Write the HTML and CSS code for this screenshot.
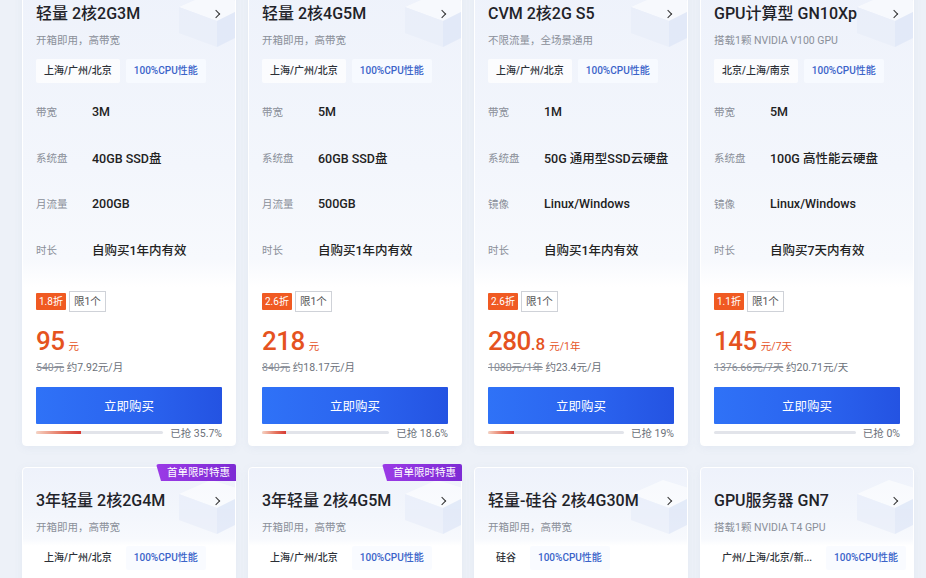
FILE: index.html
```html
<!DOCTYPE html>
<html lang="zh-CN">
<head>
<meta charset="utf-8">
<title>活动</title>
<link rel="stylesheet" href="styles.css">
</head>
<body>
<div class="grid">

  <div class="card">
    <div class="deco"><svg class="cube" viewBox="0 0 80 64" width="80" height="64"><polygon points="8,20 40,6 78,18 46,34" fill="#ffffff"/><polygon points="8,20 46,34 46,60 8,46" fill="#e6ecf9"/><polygon points="46,34 78,18 78,44 46,60" fill="#d8e2f6"/></svg></div>
    <div class="head"><span class="title">轻量 2核2G3M</span><span class="chev"></span></div>
    <div class="sub">开箱即用，高带宽</div>
    <div class="tags"><span class="tag">上海/广州/北京</span><span class="tag blue">100%CPU性能</span></div>
    <div class="specs">
      <div class="spec"><span class="k">带宽</span><span class="v">3M</span></div>
      <div class="spec"><span class="k">系统盘</span><span class="v">40GB SSD盘</span></div>
      <div class="spec"><span class="k">月流量</span><span class="v">200GB</span></div>
      <div class="spec"><span class="k">时长</span><span class="v">自购买1年内有效</span></div>
    </div>
    <div class="disc"><span class="off">1.8折</span><span class="lim">限1个</span></div>
    <div class="price"><span class="num">95</span><span class="unit">元</span></div>
    <div class="old"><s>540元</s> 约7.92元/月</div>
    <div class="btn">立即购买</div>
    <div class="prog"><div class="track"><div class="fill" style="width:35.7%"></div></div><span class="pct">已抢 35.7%</span></div>
  </div>

  <div class="card">
    <div class="deco"><svg class="cube" viewBox="0 0 80 64" width="80" height="64"><polygon points="8,20 40,6 78,18 46,34" fill="#ffffff"/><polygon points="8,20 46,34 46,60 8,46" fill="#e6ecf9"/><polygon points="46,34 78,18 78,44 46,60" fill="#d8e2f6"/></svg></div>
    <div class="head"><span class="title">轻量 2核4G5M</span><span class="chev"></span></div>
    <div class="sub">开箱即用，高带宽</div>
    <div class="tags"><span class="tag">上海/广州/北京</span><span class="tag blue">100%CPU性能</span></div>
    <div class="specs">
      <div class="spec"><span class="k">带宽</span><span class="v">5M</span></div>
      <div class="spec"><span class="k">系统盘</span><span class="v">60GB SSD盘</span></div>
      <div class="spec"><span class="k">月流量</span><span class="v">500GB</span></div>
      <div class="spec"><span class="k">时长</span><span class="v">自购买1年内有效</span></div>
    </div>
    <div class="disc"><span class="off">2.6折</span><span class="lim">限1个</span></div>
    <div class="price"><span class="num">218</span><span class="unit">元</span></div>
    <div class="old"><s>840元</s> 约18.17元/月</div>
    <div class="btn">立即购买</div>
    <div class="prog"><div class="track"><div class="fill" style="width:18.6%"></div></div><span class="pct">已抢 18.6%</span></div>
  </div>

  <div class="card">
    <div class="deco"><svg class="cube" viewBox="0 0 80 64" width="80" height="64"><polygon points="8,20 40,6 78,18 46,34" fill="#ffffff"/><polygon points="8,20 46,34 46,60 8,46" fill="#e6ecf9"/><polygon points="46,34 78,18 78,44 46,60" fill="#d8e2f6"/></svg></div>
    <div class="head"><span class="title">CVM 2核2G S5</span><span class="chev"></span></div>
    <div class="sub">不限流量，全场景通用</div>
    <div class="tags"><span class="tag">上海/广州/北京</span><span class="tag blue">100%CPU性能</span></div>
    <div class="specs">
      <div class="spec"><span class="k">带宽</span><span class="v">1M</span></div>
      <div class="spec"><span class="k">系统盘</span><span class="v">50G 通用型SSD云硬盘</span></div>
      <div class="spec"><span class="k">镜像</span><span class="v">Linux/Windows</span></div>
      <div class="spec"><span class="k">时长</span><span class="v">自购买1年内有效</span></div>
    </div>
    <div class="disc"><span class="off">2.6折</span><span class="lim">限1个</span></div>
    <div class="price"><span class="num">280</span><span class="dec">.8</span><span class="unit">元/1年</span></div>
    <div class="old"><s>1080元/1年</s> 约23.4元/月</div>
    <div class="btn">立即购买</div>
    <div class="prog"><div class="track"><div class="fill" style="width:19%"></div></div><span class="pct">已抢 19%</span></div>
  </div>

  <div class="card">
    <div class="deco"><svg class="cube" viewBox="0 0 80 64" width="80" height="64"><polygon points="8,20 40,6 78,18 46,34" fill="#ffffff"/><polygon points="8,20 46,34 46,60 8,46" fill="#e6ecf9"/><polygon points="46,34 78,18 78,44 46,60" fill="#d8e2f6"/></svg></div>
    <div class="head"><span class="title">GPU计算型 GN10Xp</span><span class="chev"></span></div>
    <div class="sub">搭载1颗 NVIDIA V100 GPU</div>
    <div class="tags"><span class="tag">北京/上海/南京</span><span class="tag blue">100%CPU性能</span></div>
    <div class="specs">
      <div class="spec"><span class="k">带宽</span><span class="v">5M</span></div>
      <div class="spec"><span class="k">系统盘</span><span class="v">100G 高性能云硬盘</span></div>
      <div class="spec"><span class="k">镜像</span><span class="v">Linux/Windows</span></div>
      <div class="spec"><span class="k">时长</span><span class="v">自购买7天内有效</span></div>
    </div>
    <div class="disc"><span class="off">1.1折</span><span class="lim">限1个</span></div>
    <div class="price"><span class="num">145</span><span class="unit">元/7天</span></div>
    <div class="old"><s>1376.66元/7天</s> 约20.71元/天</div>
    <div class="btn">立即购买</div>
    <div class="prog"><div class="track"><div class="fill" style="width:0%"></div></div><span class="pct">已抢 0%</span></div>
  </div>

  <div class="card short">
    <div class="deco"><svg class="cube" viewBox="0 0 80 64" width="80" height="64"><polygon points="8,20 40,6 78,18 46,34" fill="#ffffff"/><polygon points="8,20 46,34 46,60 8,46" fill="#e6ecf9"/><polygon points="46,34 78,18 78,44 46,60" fill="#d8e2f6"/></svg></div>
    <span class="badge">首单限时特惠</span>
    <div class="head"><span class="title">3年轻量 2核2G4M</span><span class="chev"></span></div>
    <div class="sub">开箱即用，高带宽</div>
    <div class="tags"><span class="tag">上海/广州/北京</span><span class="tag blue">100%CPU性能</span></div>
  </div>

  <div class="card short">
    <div class="deco"><svg class="cube" viewBox="0 0 80 64" width="80" height="64"><polygon points="8,20 40,6 78,18 46,34" fill="#ffffff"/><polygon points="8,20 46,34 46,60 8,46" fill="#e6ecf9"/><polygon points="46,34 78,18 78,44 46,60" fill="#d8e2f6"/></svg></div>
    <span class="badge">首单限时特惠</span>
    <div class="head"><span class="title">3年轻量 2核4G5M</span><span class="chev"></span></div>
    <div class="sub">开箱即用，高带宽</div>
    <div class="tags"><span class="tag">上海/广州/北京</span><span class="tag blue">100%CPU性能</span></div>
  </div>

  <div class="card short">
    <div class="deco"><svg class="cube" viewBox="0 0 80 64" width="80" height="64"><polygon points="8,20 40,6 78,18 46,34" fill="#ffffff"/><polygon points="8,20 46,34 46,60 8,46" fill="#e6ecf9"/><polygon points="46,34 78,18 78,44 46,60" fill="#d8e2f6"/></svg></div>
    <div class="head"><span class="title">轻量-硅谷 2核4G30M</span><span class="chev"></span></div>
    <div class="sub">开箱即用，高带宽</div>
    <div class="tags"><span class="tag">硅谷</span><span class="tag blue">100%CPU性能</span></div>
  </div>

  <div class="card short">
    <div class="deco"><svg class="cube" viewBox="0 0 80 64" width="80" height="64"><polygon points="8,20 40,6 78,18 46,34" fill="#ffffff"/><polygon points="8,20 46,34 46,60 8,46" fill="#e6ecf9"/><polygon points="46,34 78,18 78,44 46,60" fill="#d8e2f6"/></svg></div>
    <div class="head"><span class="title">GPU服务器 GN7</span><span class="chev"></span></div>
    <div class="sub">搭载1颗 NVIDIA T4 GPU</div>
    <div class="tags"><span class="tag">广州/上海/北京/新...</span><span class="tag blue">100%CPU性能</span></div>
  </div>

</div>
</body>
</html>
```

FILE: styles.css
```css
* { box-sizing: border-box; }
html, body { margin: 0; padding: 0; }
body {
  background: #edf1f8;
  font-family: "Roboto", "Noto Sans CJK SC", sans-serif;
  color: #1f2329;
  overflow: hidden;
  height: 578px;
}
.grid {
  display: grid;
  grid-template-columns: repeat(4, 214px);
  column-gap: 12px;
  row-gap: 21px;
  margin-top: -20px;
  padding-left: 22px;
}
.card {
  position: relative;
  min-height: 464px;
  padding: 21px 13px 6px 13px;
  border: 1px solid #ffffff;
  border-radius: 4px;
  background: linear-gradient(180deg, #eef2fb 0%, #f3f6fc 40%, #f7f9fd 60%, #ffffff 66%, #ffffff 100%);
  box-shadow: 0 2px 8px rgba(120, 140, 180, 0.08);
  display: flex;
  flex-direction: column;
}
.card.short {
  min-height: 120px;
}
.deco {
  position: absolute;
  inset: 0;
  overflow: hidden;
  border-radius: 4px;
  pointer-events: none;
}
.cube {
  position: absolute;
  right: -16px;
  top: 6px;
  opacity: 0.55;
}
.badge {
  position: absolute;
  top: -4px;
  right: -1px;
  height: 17px;
  padding: 0 6px 0 11px;
  font-size: 10.5px;
  line-height: 17px;
  color: #fff;
  background: linear-gradient(90deg, #9b3ae6, #7d2bd4);
  clip-path: polygon(0 0, 100% 0, 100% 100%, 5px 100%);
  border-top-left-radius: 3px;
  border-top-right-radius: 2px;
  z-index: 2;
}
.head {
  position: relative;
  display: flex;
  align-items: center;
  justify-content: space-between;
  height: 24px;
}
.title {
  font-size: 16px;
  font-weight: 500;
  line-height: 24px;
  color: #1f2329;
  white-space: nowrap;
}
.chev {
  width: 6px;
  height: 6px;
  border-top: 1.6px solid #333;
  border-right: 1.6px solid #333;
  transform: rotate(45deg);
  margin-right: 3px;
}
.sub {
  position: relative;
  margin-top: 7px;
  font-size: 10.5px;
  line-height: 16px;
  color: #8a8f99;
  white-space: nowrap;
}
.tags {
  position: relative;
  display: flex;
  gap: 6px;
  margin-top: 10px;
  height: 24px;
}
.tag {
  display: block;
  padding: 0 8px;
  font-size: 10px;
  font-weight: 500;
  line-height: 24px;
  color: #2b2f36;
  background: rgba(255, 255, 255, 0.75);
  border-radius: 2px;
  white-space: nowrap;
}
.tag.blue {
  color: #3a63c9;
  background: rgba(248, 250, 255, 0.85);
}
.specs {
  margin-top: 5px;
  display: flex;
  flex-direction: column;
}
.spec {
  display: flex;
  align-items: center;
  height: 46px;
}
.k {
  width: 56px;
  font-size: 10.5px;
  color: #8a8f99;
}
.v {
  font-size: 12.5px;
  font-weight: 500;
  color: #222;
  white-space: nowrap;
}
.disc {
  margin-top: 19px;
  display: flex;
  align-items: center;
  gap: 3px;
  height: 21px;
}
.off {
  height: 17px;
  padding: 0 3px;
  font-size: 10px;
  line-height: 17px;
  color: #fff;
  background: #f05a22;
  border-radius: 1px;
}
.lim {
  height: 21px;
  padding: 0 4px;
  font-size: 10.5px;
  line-height: 19px;
  color: #555;
  border: 1px solid #cfd2d8;
  background: #fff;
}
.price {
  margin-top: 14px;
  height: 30px;
  display: flex;
  align-items: baseline;
  color: #e5531f;
}
.num {
  font-size: 26px;
  font-weight: 500;
  line-height: 30px;
  letter-spacing: -0.5px;
}
.dec {
  font-size: 17px;
  font-weight: 500;
}
.unit {
  margin-left: 4px;
  font-size: 10.5px;
}
.old {
  margin-top: 4px;
  font-size: 10.5px;
  line-height: 16px;
  color: #6b7079;
  white-space: nowrap;
}
.old s { color: #8a8f99; }
.btn {
  margin-top: 11px;
  height: 37px;
  display: flex;
  align-items: center;
  justify-content: center;
  font-size: 12.5px;
  color: #fff;
  background: linear-gradient(90deg, #2f72f7 0%, #2a62ee 60%, #2453e2 100%);
  border-radius: 1px;
}
.prog {
  margin-top: 1px;
  height: 14px;
  display: flex;
  align-items: center;
  gap: 7px;
}
.track {
  flex: 1;
  height: 3px;
  background: #e2e4ea;
  border-radius: 2px;
  overflow: hidden;
}
.fill {
  height: 100%;
  background: linear-gradient(90deg, #f6d3c3 0%, #e46f5a 60%, #d63a34 100%);
}
.pct {
  font-size: 10.5px;
  color: #6b7079;
  white-space: nowrap;
}
```
